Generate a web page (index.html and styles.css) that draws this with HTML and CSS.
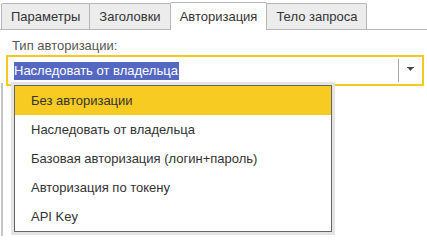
FILE: index.html
```html
<!DOCTYPE html>
<html lang="ru">
<head>
<meta charset="utf-8">
<link rel="stylesheet" href="styles.css">
</head>
<body>
<div class="tabs">
  <div class="tab">Параметры</div>
  <div class="tab">Заголовки</div>
  <div class="tab active">Авторизация</div>
  <div class="tab">Тело запроса</div>
</div>
<div class="panel">
  <div class="label">Тип авторизации:</div>
  <div class="combo">
    <div class="value"><span class="sel">Наследовать от владельца</span></div>
    <div class="sep"></div>
    <div class="arrow">
      <svg width="7" height="4" viewBox="0 0 7 4"><rect x="0" y="0" width="7" height="1" fill="#444"/><polygon points="1,1 6,1 3.5,4" fill="#444"/></svg>
    </div>
  </div>
</div>
<div class="popup">
  <div class="item current">Без авторизации</div>
  <div class="item">Наследовать от владельца</div>
  <div class="item">Базовая авторизация (логин+пароль)</div>
  <div class="item">Авторизация по токену</div>
  <div class="item">API Key</div>
</div>
</body>
</html>
```
FILE: styles.css
```css
html, body {
  margin: 0;
  padding: 0;
  background: #fff;
}
body {
  font-family: "Liberation Sans", Arial, sans-serif;
  font-size: 13px;
  color: #333;
  width: 427px;
  height: 250px;
  overflow: hidden;
  position: relative;
}
.tabs {
  display: flex;
  align-items: flex-end;
  height: 30px;
  box-sizing: border-box;
  padding: 2px 0 0 1px;
  border-bottom: 1px solid #b6b6b6;
}
.tab {
  height: 26px;
  box-sizing: border-box;
  padding: 0 9px;
  display: flex;
  align-items: center;
  background: #ececec;
  border: 1px solid #b6b6b6;
  border-bottom: none;
  border-radius: 2px 2px 0 0;
  color: #333;
}
.tab + .tab {
  margin-left: -1px;
}
.tab.active {
  height: 28px;
  margin-bottom: -1px;
  background: #fff;
  padding-bottom: 1px;
}
.panel {
  padding: 8px 3px 0 6px;
}
.label {
  line-height: 16px;
  color: #555;
  padding-left: 6px;
  margin-bottom: 1px;
}
.combo {
  height: 31px;
  box-sizing: border-box;
  border: 2px solid #f7c91f;
  display: flex;
  align-items: center;
}
.value {
  flex: 1;
  padding-left: 6px;
}
.sel {
  display: inline-block;
  background: #5468c2;
  color: #fff;
  line-height: 18px;
  padding-right: 1px;
}
.sep {
  width: 1px;
  height: 23px;
  background: #a8a8a8;
}
.arrow {
  width: 23px;
  display: flex;
  justify-content: center;
  padding-bottom: 3px;
}
.arrow svg {
  display: block;
}
.popup {
  position: absolute;
  left: 14px;
  top: 85px;
  width: 318px;
  box-sizing: border-box;
  border: 1px solid #666;
  background: #fff;
  box-shadow: 0 0 0 3px #e4e4e4;
}
.popup::before {
  content: "";
  position: absolute;
  left: -14px;
  top: -3px;
  width: 2px;
  height: 153px;
  background: #c6c6c6;
}
.item {
  height: 29px;
  line-height: 29px;
  padding-left: 16px;
  color: #333;
  white-space: nowrap;
}
.item.current {
  background: #f8cb22;
}
```
